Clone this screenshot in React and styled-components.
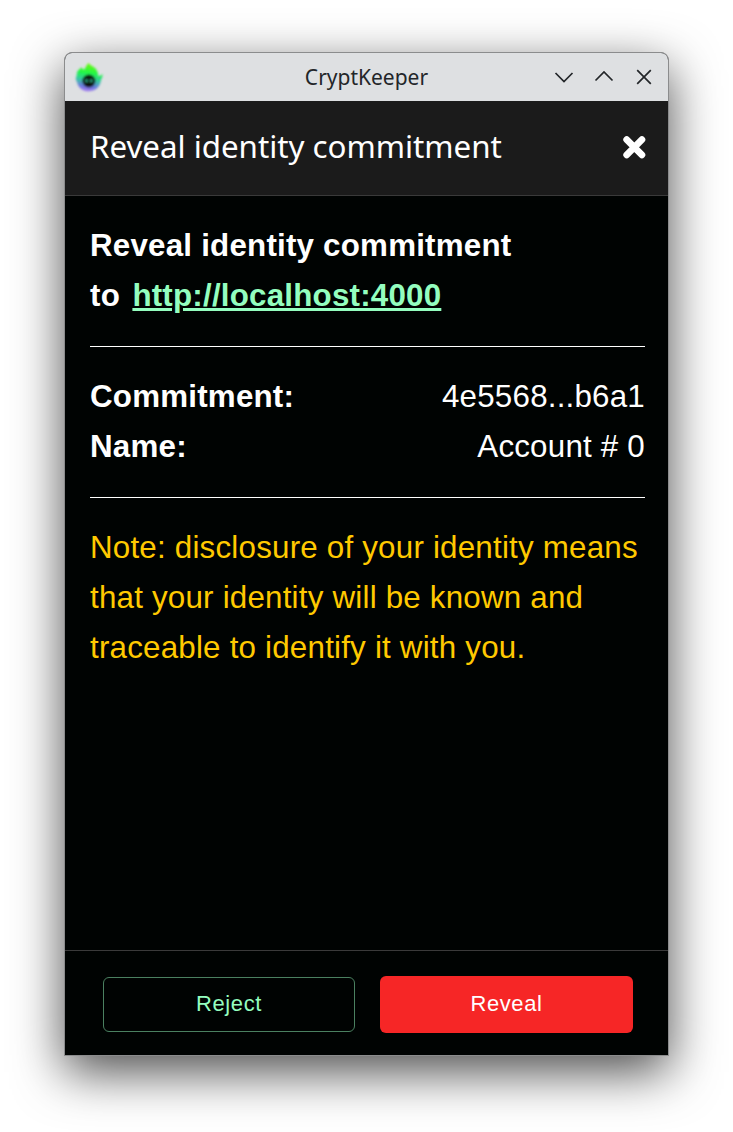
import React from "react";
import styled, { createGlobalStyle, css } from "styled-components";

const GlobalStyle = createGlobalStyle`
  *, *::before, *::after { box-sizing: border-box; }
  body { margin: 0; background: #fff; }
`;

const Desktop = styled.div`
  width: 733px;
  height: 1132px;
  padding: 52px 64px 76px;
  overflow: hidden;
  background: #fff;
`;

const Window = styled.div`
  display: flex;
  flex-direction: column;
  width: 605px;
  height: 1004px;
  border: 1px solid #8b8c8d;
  border-radius: 8px 8px 0 0;
  overflow: hidden;
  background: #000302;
  box-shadow: 0 16px 50px rgba(0, 0, 0, 0.7);
`;

const TitleBar = styled.div`
  display: grid;
  grid-template-columns: 120px 1fr 120px;
  align-items: center;
  flex: none;
  height: 48px;
  padding: 0 4px 0 9px;
  background: #dee0e2;
  color: #232629;
`;

const WindowTitle = styled.div`
  padding: 0 5px 0 0;
  text-align: center;
  font: 400 21px/28px "Noto Sans", sans-serif;
`;

const WindowControls = styled.div`
  display: flex;
  justify-content: flex-end;

  svg { display: block; width: 40px; height: 40px; }
`;

const Logo = styled.svg`
  display: block;
  width: 30px;
  height: 30px;
  overflow: visible;
`;

const Header = styled.header`
  display: flex;
  align-items: center;
  justify-content: space-between;
  flex: none;
  height: 95px;
  padding: 0 21px 2px 25px;
  background: #1b1b1b;
  border-bottom: 1px solid #3a3a3a;
`;

const HeaderTitle = styled.h1`
  margin: 0 0 3px;
  font: 400 31.34px/47px "Noto Sans", sans-serif;
  letter-spacing: -0.035px;
  color: #fff;
`;

const CloseIcon = styled.svg`
  display: block;
  width: 26px;
  height: 26px;
`;

const Content = styled.main`
  flex: 1;
  padding: 25px 23px 0 25px;
  font: 400 31.34px/50px "Liberation Sans", Arial, sans-serif;
  letter-spacing: 0.205px;
  color: #fff;
`;

const Heading = styled.div`
  font-weight: 700;
`;

const Link = styled.a`
  margin-left: 3.5px;
  color: #94febf;
  text-decoration: underline;
`;

const Details = styled.div`
  margin: 25px 0;
  padding: 25px 0;
  border: solid #fff;
  border-width: 1px 0;
`;

const DetailRow = styled.div`
  display: flex;
  justify-content: space-between;
`;

const Label = styled.span`
  font-weight: 700;
`;

const Note = styled.div`
  color: #ffc900;
  white-space: nowrap;
`;

const Footer = styled.footer`
  display: grid;
  grid-template-columns: 252px 253px;
  align-items: center;
  gap: 25px;
  flex: none;
  height: 105px;
  padding: 3px 35px 0 38px;
  border-top: 1px solid #3a3a3a;
`;

const Button = styled.button`
  padding: 0 0 2px;
  border-radius: 6px;
  font: 400 21.94px/38px "Liberation Sans", Arial, sans-serif;
  letter-spacing: 0.6px;
  ${({ $danger }) =>
    $danger
      ? css`
          height: 57px;
          border: 0;
          background: #f62626;
          color: #fff;
        `
      : css`
          height: 55px;
          border: 1px solid #4a8060;
          background: transparent;
          color: #94febf;
        `}
`;

function CryptKeeperLogo() {
  return (
    <Logo viewBox="0 0 30 30">
      <defs>
        <linearGradient id="flame" x1="0.58" y1="0" x2="0.45" y2="1">
          <stop offset="0" stopColor="#70fb08" />
          <stop offset="0.36" stopColor="#20f746" />
          <stop offset="0.6" stopColor="#35c9a0" />
          <stop offset="0.84" stopColor="#6b79df" />
          <stop offset="1" stopColor="#a477ef" />
        </linearGradient>
        <filter id="soften" x="-20%" y="-20%" width="140%" height="140%">
          <feGaussianBlur stdDeviation="0.8" />
        </filter>
      </defs>
      <g filter="url(#soften)">
        <path
          d="M14.500 1C16 3.500 19 4 21 6C22.500 7.500 24 9.500 24.300 14C25.500 14.500 27 13 28.600 12.300C28.800 15 27 17 26.600 20C25.300 25.500 20.800 29.300 14.800 29.300C8.800 29.300 4.200 26 3 20C2.300 18.500 1.500 17 1.900 15.500C3.200 14.500 2.300 11 3.700 9C4.700 7.600 6.300 6.800 7.500 5.300C8.300 6.500 8.800 7.500 10 7.500C11.600 7 10.800 5 14.500 1Z"
          fill="url(#flame)"
        />
        <circle cx="14.900" cy="19" r="6.500" fill="#07120f" />
        <ellipse cx="12.500" cy="18.700" rx="1.500" ry="1.800" fill="#2a9a76" />
        <ellipse cx="17.300" cy="18.700" rx="1.500" ry="1.800" fill="#2a9a76" />
      </g>
    </Logo>
  );
}

function ControlIcon({ d }) {
  return (
    <svg viewBox="0 0 40 40" fill="none" stroke="#232629" strokeWidth="1.700">
      <path d={d} />
    </svg>
  );
}

export default function App() {
  return (
    <>
      <GlobalStyle />
      <Desktop>
        <Window>
          <TitleBar>
            <CryptKeeperLogo />
            <WindowTitle>CryptKeeper</WindowTitle>
            <WindowControls>
              <ControlIcon d="M11.500 16l8.500 8.500 8.500-8.500" />
              <ControlIcon d="M11.500 23.500l8.500-8.500 8.500 8.500" />
              <ControlIcon d="M13.200 13.200l13.600 13.600M26.800 13.200l-13.600 13.600" />
            </WindowControls>
          </TitleBar>
          <Header>
            <HeaderTitle>Reveal identity commitment</HeaderTitle>
            <CloseIcon viewBox="0 0 26 26">
              <path d="M5.700 5.700l15.200 15.200M20.900 5.700l-15.200 15.200" stroke="#fff" strokeWidth="6.800" strokeLinecap="round" />
            </CloseIcon>
          </Header>
          <Content>
            <Heading>
              Reveal identity commitment
              <br />
              to <Link>http://localhost:4000</Link>
            </Heading>
            <Details>
              <DetailRow>
                <Label>Commitment:</Label>
                <span>4e5568...b6a1</span>
              </DetailRow>
              <DetailRow>
                <Label>Name:</Label>
                <span>Account # 0</span>
              </DetailRow>
            </Details>
            <Note>
              Note: disclosure of your identity means
              <br />
              that your identity will be known and
              <br />
              traceable to identify it with you.
            </Note>
          </Content>
          <Footer>
            <Button>Reject</Button>
            <Button $danger>Reveal</Button>
          </Footer>
        </Window>
      </Desktop>
    </>
  );
}
